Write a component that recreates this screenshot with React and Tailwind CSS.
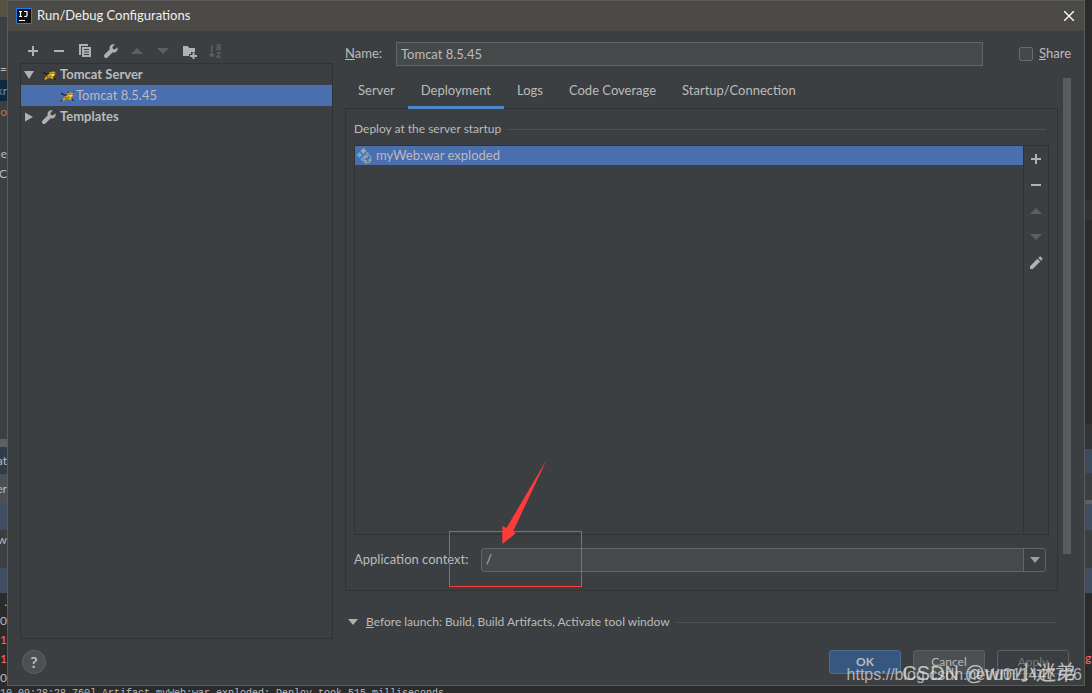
import React, { useState } from 'react';

const tabs = ['Server', 'Deployment', 'Logs', 'Code Coverage', 'Startup/Connection'];

// Slices of the IDE window that stay visible on both sides of the dialog
const leftEdge = [
  { h: 'h-[17px]', bg: 'bg-[#575143]' },
  { h: 'h-[40px]', bg: 'bg-[#3c3f41]' },
  { h: 'h-[23px]', bg: 'bg-[#3c3f41]', text: '=' },
  { h: 'h-[21px]', bg: 'bg-[#0d293e]', text: 'kr', color: 'text-[#6897bb]' },
  { h: 'h-[22px]', bg: 'bg-[#3c3f41]', text: 'o', color: 'text-[#c57633]' },
  { h: 'h-[20px]', bg: 'bg-[#3c3f41]' },
  { h: 'h-[21px]', bg: 'bg-[#3c3f41]', text: 'ie' },
  { h: 'h-[20px]', bg: 'bg-[#3c3f41]', text: 'C' },
  { h: 'h-[255px]', bg: 'bg-[#3c3f41]' },
  { h: 'h-[8px]', bg: 'bg-[#5e6060]' },
  { h: 'h-[27px]', bg: 'bg-[#2f3d4b]', text: 'at' },
  { h: 'h-[30px]', bg: 'bg-[#4c5052]', text: 'er' },
  { h: 'h-[26px]', bg: 'bg-[#414d63]' },
  { h: 'h-[20px]', bg: 'bg-[#3c3f41]', text: ':w' },
  { h: 'h-[18px]', bg: 'bg-[#3c3f41]' },
  { h: 'h-[25px]', bg: 'bg-[#414d63]' },
  { h: 'h-[18px]', bg: 'bg-[#2b2b2b]', text: '.' },
  { h: 'h-[19px]', bg: 'bg-[#2b2b2b]', text: '-0' },
  { h: 'h-[19px]', bg: 'bg-[#2b2b2b]', text: '1', color: 'text-[#ff6b68]' },
  { h: 'h-[19px]', bg: 'bg-[#2b2b2b]', text: '1', color: 'text-[#ff6b68]' },
  { h: 'h-[19px]', bg: 'bg-[#2b2b2b]', text: '-0' },
];

const rightEdge = [
  { h: 'h-[200px]', bg: 'bg-[#2b2b2b]' },
  { h: 'h-[20px]', bg: 'bg-[#323232]' },
  { h: 'h-[204px]', bg: 'bg-[#2b2b2b]' },
  { h: 'h-[25px]', bg: 'bg-[#313335]' },
  { h: 'h-[24px]', bg: 'bg-[#3d4b5f]' },
  { h: 'h-[27px]', bg: 'bg-[#3c3f41]' },
  { h: 'h-[4px]', bg: 'bg-[#5e6060]' },
  { h: 'h-[26px]', bg: 'bg-[#414d63]' },
  { h: 'h-[38px]', bg: 'bg-[#3c3f41]' },
  { h: 'h-[25px]', bg: 'bg-[#414d63]' },
  { h: 'h-[55px]', bg: 'bg-[#2b2b2b]' },
  { h: 'h-[20px]', bg: 'bg-[#2b2b2b]', text: 'gi', color: 'text-[#ff6b68]' },
];

const EdgeStrip = ({ slices, align }) => (
  <div className="w-[7px] shrink-0 overflow-hidden bg-[#2b2b2b] text-xs" aria-hidden="true">
    {slices.map((s, i) => (
      <div key={i} className={`${s.h} ${s.bg} ${s.color || 'text-[#bbbbbb]'} ${align} flex items-center overflow-hidden`}>
        {s.text}
      </div>
    ))}
  </div>
);

const Icon = ({ children, className = '' }) => (
  <svg width="16" height="16" viewBox="0 0 16 16" className={`shrink-0 ${className}`} aria-hidden="true">
    {children}
  </svg>
);

const PlusIcon = () => <Icon><path fill="#afb1b3" d="M7 3h2v4h4v2H9v4H7V9H3V7h4z" /></Icon>;
const MinusIcon = () => <Icon><path fill="#afb1b3" d="M3 7h10v2H3z" /></Icon>;
const UpIcon = () => <Icon><path fill="#5d5f60" d="M2 11l6-6 6 6z" /></Icon>;
const DownIcon = () => <Icon><path fill="#5d5f60" d="M2 5h12l-6 6z" /></Icon>;

const CopyIcon = () => (
  <Icon>
    <path fill="#afb1b3" d="M2 1h9v2H4v9H2z" />
    <path fill="#afb1b3" fillRule="evenodd" d="M5 4h9v10H5zM7 6v1h5V6zM7 8.500v1h5v-1zM7 11v1h5v-1z" />
  </Icon>
);

const WrenchIcon = () => (
  <Icon>
    <path fill="#afb1b3" d="M14.400 4.200l-2.500 2.400-2-.5-.5-2 2.400-2.500C10.300 1 8.500 1.300 7.500 2.500c-1 1.100-1.200 2.500-.7 3.800L1.600 11.500c-.8.800-.8 2.100 0 2.900.8.800 2.100.8 2.900 0l5.200-5.200c1.300.5 2.800.3 3.800-.8 1.100-1.100 1.500-2.800.9-4.200z" />
  </Icon>
);

const FolderAddIcon = () => (
  <Icon>
    <path fill="#afb1b3" d="M2 3h4.500l2 2H14v4h-4v2H8v2H2z" />
    <path fill="#afb1b3" d="M11.500 9.500h2V12H16v2h-2.500v2.500h-2V14H9v-2h2.500z" />
  </Icon>
);

const SortIcon = () => (
  <Icon>
    <path fill="#5d5f60" d="M4 2h1.500v9H8l-3.200 3.500L1.500 11H4z" />
    <path fill="none" stroke="#5d5f60" strokeWidth="1.400" d="M9.500 2h3.300v5M12.800 4.300h-2.600v2.200h2.600M9.500 9.600h3.600L9.900 14h3.800" />
  </Icon>
);

const PencilIcon = () => (
  <Icon>
    <path fill="#afb1b3" d="M2 11.200L9.400 3.800l2.800 2.800L4.800 14H2zM10.300 2.900l1-1c.5-.5 1.200-.5 1.700 0l1.100 1.100c.5.500.5 1.200 0 1.700l-1 1z" />
  </Icon>
);

const TomcatIcon = ({ className = '' }) => (
  <Icon className={className}>
    <path fill="none" stroke="#1f1c12" strokeWidth="1.200" d="M2 5l3 2 3 .2M2 13l3-1.500M13 11l1.500 2" />
    <path fill="#d2a41e" d="M8.500 6.500L9 4l1.500.8h2L14 4l.4 3-1 2-1.400.8.500 2.200h-1.500L9.500 11l-3 .5L4.500 13l-1.500-.5L5 9.500z" />
    <path fill="#f5dc7d" d="M10 6h3.500v1.600L12 9l-2-1.200z" />
    <path fill="#1f1c12" d="M8.500 3l1.500 1.200-1 1zM14.500 3l.2 2-1.200-.9zM10.400 6h1v1h-1zM12.600 6h1v1h-1zM6 9.300l2 .6-1.500.8zM8.500 9l1.500.6-1 .7z" />
  </Icon>
);

const ArtifactIcon = () => (
  <Icon>
    <path fill="#9aa7b0" d="M7.500 0l3 3-3 3-3-3z" />
    <path fill="#40b6e0" d="M3.500 4l3 3-3 3-3-3z" />
    <path fill="#9aa7b0" d="M7.500 8L6.600 9l-.6 2v2.500L4.500 11zM11.500 4l2 2h-4z" />
    <circle cx="11" cy="11" r="4" fill="#4b6eaf" stroke="#9aa7b0" strokeWidth="1.200" />
    <path fill="#9aa7b0" d="M8 9l3-1.500 1 1-1 1.500H9.500L9 11.500l2 1v2L8.500 13zM12.500 11l2-.5-.5 2-1.500 1z" />
  </Icon>
);

const toolbar = [
  { label: 'Add', icon: <PlusIcon /> },
  { label: 'Remove', icon: <MinusIcon /> },
  { label: 'Copy', icon: <CopyIcon /> },
  { label: 'Edit templates', icon: <WrenchIcon /> },
  { label: 'Move up', icon: <UpIcon />, disabled: true },
  { label: 'Move down', icon: <DownIcon />, disabled: true },
  { label: 'New folder', icon: <FolderAddIcon /> },
  { label: 'Sort', icon: <SortIcon />, disabled: true },
];

const artifactActions = [
  { label: 'Add artifact', icon: <PlusIcon /> },
  { label: 'Remove artifact', icon: <MinusIcon /> },
  { label: 'Move artifact up', icon: <UpIcon />, disabled: true },
  { label: 'Move artifact down', icon: <DownIcon />, disabled: true },
  { label: 'Edit artifact', icon: <PencilIcon /> },
];

const IconButton = ({ label, icon, disabled }) => (
  <button type="button" aria-label={label} disabled={disabled} className="size-4">
    {icon}
  </button>
);

const ConfigTree = () => (
  <div className="flex w-[313px] shrink-0 flex-col">
    <div className="flex h-8 items-center gap-2.5 pt-2 pl-[5px]">
      {toolbar.map((item) => (
        <IconButton key={item.label} {...item} />
      ))}
    </div>
    <ul className="flex-1 border border-[#323232] text-[13px] leading-[21px]">
      <li>
        <div className="flex h-[21px] items-center font-bold">
          <Icon><path fill="#afb1b3" d="M3 4h10l-5 8z" /></Icon>
          <TomcatIcon className="ml-1" />
          <span className="ml-[3px]">Tomcat Server</span>
        </div>
        <div className="flex h-[21px] items-center bg-[#4b6eaf] pl-[38px]">
          <TomcatIcon />
          <span className="ml-px">Tomcat 8.5.45</span>
        </div>
      </li>
      <li className="flex h-[21px] items-center font-bold">
        <Icon><path fill="#afb1b3" d="M4 3.500v9l8-4.500z" /></Icon>
        <span className="ml-1"><WrenchIcon /></span>
        <span className="ml-[3px]">Templates</span>
      </li>
    </ul>
  </div>
);

const DeploymentPanel = () => (
  <div className="flex flex-1 flex-col border border-[#323232] px-2 pt-2.5 pb-[18px]">
    <div className="mr-[3px] flex h-5 items-center gap-1.5 text-xs">
      <span>Deploy at the server startup</span>
      <span className="h-px flex-1 bg-[#515151]" />
    </div>
    <div className="mt-1.5 flex flex-1 border border-[#323232]">
      <ul className="flex-1 text-[13px]">
        <li className="flex h-[19px] items-center gap-1 bg-[#4b6eaf] pl-px">
          <ArtifactIcon />
          <span>myWeb:war exploded</span>
        </li>
      </ul>
      <div className="flex w-[25px] flex-col items-center gap-2.5 border-l border-[#323232] pt-[5px]">
        {artifactActions.map((item) => (
          <IconButton key={item.label} {...item} />
        ))}
      </div>
    </div>
    <div className="mt-[13px] mr-[3px] flex h-6 items-center text-[13px]">
      <label htmlFor="context" className="w-[127px] shrink-0">Application context:</label>
      <div className="relative h-6 flex-1">
        <select id="context" defaultValue="/" className="h-6 w-full appearance-none rounded-[3px] border border-[#646464] bg-[#45494a] px-1">
          <option>/</option>
        </select>
        <span className="pointer-events-none absolute inset-y-px right-px flex w-[22px] items-center justify-center rounded-r-xs border-l border-[#646464] bg-[#3c3f41]">
          <svg width="10" height="6" viewBox="0 0 10 6" aria-hidden="true"><path fill="#9a9da0" d="M0 0h10L5 6z" /></svg>
        </span>
        {/* Red call-out around the context path */}
        <div className="pointer-events-none absolute -top-[17px] -left-8 h-14 w-[133px] border border-[#ff3a3a]" />
        <svg width="48" height="88" viewBox="0 0 48 88" className="pointer-events-none absolute -top-[89px] left-5" aria-hidden="true">
          <path fill="#ff3a3a" d="M46 0L12.500 71.500l2 3L1.300 85V67l4.200 2z" />
        </svg>
      </div>
    </div>
  </div>
);

export default function App() {
  const [activeTab, setActiveTab] = useState('Deployment');

  return (
    <div className="flex h-screen flex-col overflow-hidden bg-[#2b2b2b] font-['Lato','Noto_Sans_CJK_SC',sans-serif] text-[#bbbbbb]">
      <div className="flex min-h-0 flex-1">
        <EdgeStrip slices={leftEdge} align="justify-end" />
        <main className="relative flex min-w-0 flex-1 flex-col border border-[#5a5a5a] bg-[#3c3f41]">
          <header className="flex h-[30px] shrink-0 items-center bg-[#4b4a47] pr-2.5 pl-2 text-[#f0f0f0]">
            <svg width="16" height="16" viewBox="0 0 16 16" aria-hidden="true">
              <path fill="#111111" stroke="#1e7bf2" d="M.5.5h15v15H.5z" />
              <path fill="none" stroke="#ffffff" strokeWidth="1.200" d="M3 3.500h3M4.500 3.500v5M3 8.500h3M8 3.500h3v3.800c0 1-1 1.400-2.800 1.100M3 12.500h6" />
            </svg>
            <h1 className="ml-[5px] flex-1 text-[13px]">Run/Debug Configurations</h1>
            <button type="button" aria-label="Close">
              <svg width="10" height="10" viewBox="0 0 10 10" aria-hidden="true">
                <path stroke="#ffffff" strokeWidth="1.300" d="M0 0l10 10M10 0L0 10" />
              </svg>
            </button>
          </header>

          <div className="flex min-h-0 flex-1 pr-[13px] pl-3">
            <ConfigTree />
            <section className="ml-3 flex min-w-0 flex-1 flex-col">
              <div className="mt-[11px] flex h-6 items-center text-[13px]">
                <label htmlFor="name" className="w-[51px] shrink-0"><u>N</u>ame:</label>
                <input id="name" type="text" defaultValue="Tomcat 8.5.45" className="h-6 min-w-0 flex-1 border border-[#646464] bg-[#45494a] px-1" />
                <label className="ml-9 flex items-center gap-1.5">
                  <input type="checkbox" className="size-3.5 appearance-none rounded-xs border border-[#6b6b6b] bg-[#43494a]" />
                  <span><u>S</u>hare</span>
                </label>
              </div>

              <div className="flex min-h-0 flex-1 gap-[5px]">
                <div className="flex min-w-0 flex-1 flex-col">
                  <div role="tablist" className="-mb-px mt-2.5 flex text-[13px]">
                    {tabs.map((tab) => (
                      <button
                        key={tab}
                        type="button"
                        role="tab"
                        aria-selected={tab === activeTab}
                        onClick={() => setActiveTab(tab)}
                        className={`relative z-10 h-[33px] border-b-[3px] px-[13px] whitespace-nowrap ${tab === activeTab ? 'border-[#4a88c7]' : 'border-transparent'}`}
                      >
                        {tab}
                      </button>
                    ))}
                  </div>
                  <DeploymentPanel />
                  <div className="flex h-12 items-center pt-3.5 pr-[3px] pl-[3px] text-xs">
                    <svg width="10" height="6" viewBox="0 0 10 6" aria-hidden="true"><path fill="#afb1b3" d="M0 0h10L5 6z" /></svg>
                    <span className="ml-2 whitespace-nowrap"><u>B</u>efore launch: Build, Build Artifacts, Activate tool window</span>
                    <span className="ml-1.5 h-px flex-1 bg-[#515151]" />
                  </div>
                </div>
                <div className="mt-3 h-[83%] w-2 bg-[#595b5d]" />
              </div>
            </section>
          </div>

          <footer className="flex h-[46px] shrink-0 items-center gap-3 pr-[15px] pl-3.5 text-xs">
            <button type="button" aria-label="Help" className="mr-auto size-6 rounded-full border border-[#5e6162] bg-[#4c5052] text-base leading-5 font-bold">?</button>
            <button type="button" className="h-6 w-[72px] rounded-[3px] border border-[#4c708c] bg-[#365880] font-bold">OK</button>
            <button type="button" className="h-6 w-[72px] rounded-[3px] border border-[#5e6060] bg-[#4c5052]">Cancel</button>
            <button type="button" disabled className="h-6 w-[72px] rounded-[3px] border border-[#5e6060] text-[#777777]">Apply</button>
          </footer>

          {/* Blog watermarks, one over the other */}
          <div className="pointer-events-none absolute right-0.5 -bottom-0.5 font-['Liberation_Sans','Noto_Sans_CJK_SC',sans-serif] text-base leading-6 whitespace-nowrap text-[#d0d0d0]/80">
            https://blog.csdn.net/u011447726
          </div>
          <div className="pointer-events-none absolute right-2 bottom-0 font-['Liberation_Sans','Noto_Sans_CJK_SC',sans-serif] text-xl leading-6 whitespace-nowrap text-[#e0e0e0]/80">
            CSDN @wm小迷弟
          </div>
        </main>
        <EdgeStrip slices={rightEdge} align="justify-start" />
      </div>
      <div className="h-[7px] overflow-hidden font-['Liberation_Mono',monospace] text-[10px] leading-4 whitespace-pre">
        10 09:28:28,760] Artifact myWeb:war exploded: Deploy took 515 milliseconds
      </div>
    </div>
  );
}
